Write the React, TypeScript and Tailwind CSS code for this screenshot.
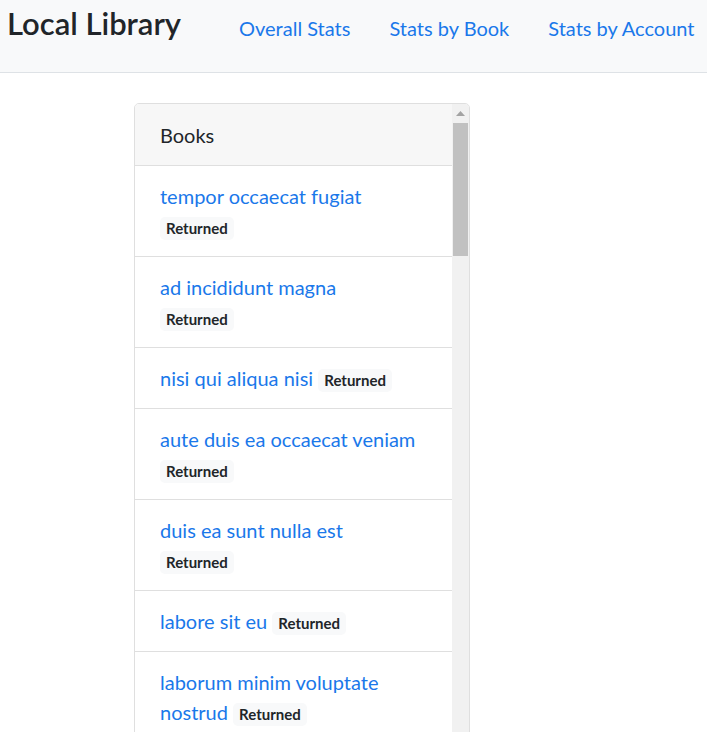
const books = [
  { title: 'tempor occaecat fugiat', wrap: true },
  { title: 'ad incididunt magna', wrap: true },
  { title: 'nisi qui aliqua nisi', wrap: false },
  { title: 'aute duis ea occaecat veniam', wrap: true },
  { title: 'duis ea sunt nulla est', wrap: true },
  { title: 'labore sit eu', wrap: false },
  { title: 'laborum minim voluptate nostrud', wrap: false },
]

const links = ['Overall Stats', 'Stats by Book', 'Stats by Account']

export default function App() {
  return (
    <div
      className="h-[732px] overflow-hidden bg-white text-[#212529]"
      style={{ fontFamily: 'Lato, "Open Sans", sans-serif' }}
    >
      {/* Navbar */}
      <nav className="flex items-start h-[73px] bg-[#f8f9fa] border-b border-[#dee2e6]">
        <a className="ml-[7px] mt-[4px] text-[31px] leading-[38px] font-semibold text-[#212529]">
          Local Library
        </a>
        <div className="flex ml-[58px] mt-[13px] gap-[39px]">
          {links.map((l) => (
            <a key={l} className="text-[20px] leading-[30px] text-[#1a78ea]">
              {l}
            </a>
          ))}
        </div>
      </nav>

      {/* Books card */}
      <div className="pl-[134px] pt-[30px]">
        <div className="w-[336px] h-[900px] flex border border-[#dfdfdf] rounded-[5px] overflow-hidden">
          <div className="flex-1 min-w-0">
            <div className="px-[25px] pt-[16px] pb-[14px] bg-[#f7f7f7] border-b border-[#dfdfdf] text-[20px] leading-[31px]">
              Books
            </div>
            <ul>
              {books.map((b) => (
                <li
                  key={b.title}
                  className="px-[25px] py-[15px] border-b border-[#dfdfdf] text-[20px] leading-[30px]"
                >
                  <a className="text-[#1a78ea]">{b.title}</a>
                  {b.wrap ? <br /> : ' '}
                  <span className="inline-block align-baseline bg-[#f8f9fa] text-[#212529] font-bold text-[15px] leading-none px-[6px] py-[4px] rounded-[5px]">
                    Returned
                  </span>
                </li>
              ))}
            </ul>
          </div>

          {/* Scrollbar */}
          <div className="w-[17px] shrink-0 bg-[#f1f1f1] flex flex-col items-center">
            <div className="h-[19px] flex items-center justify-center">
              <svg width="9" height="5" viewBox="0 0 9 5">
                <path d="M0 5 L4.5 0 L9 5 Z" fill="#a3a3a3" />
              </svg>
            </div>
            <div className="w-[15px] h-[133px] bg-[#c1c1c1]" />
          </div>
        </div>
      </div>
    </div>
  )
}
